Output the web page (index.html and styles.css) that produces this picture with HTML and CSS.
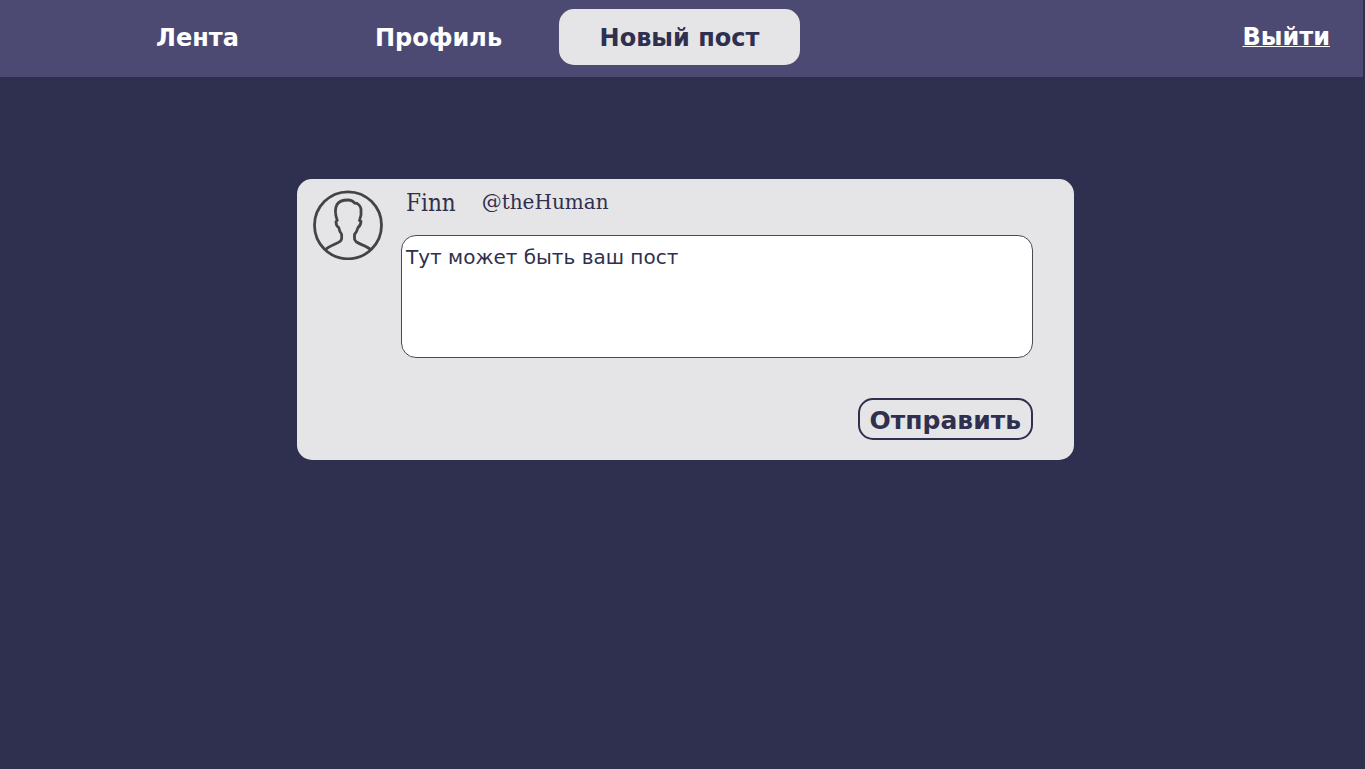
FILE: index.html
```html
<!DOCTYPE html>
<html lang="ru">
<head>
<meta charset="utf-8">
<meta name="viewport" content="width=device-width, initial-scale=1">
<title>Новый пост</title>
<link rel="stylesheet" href="styles.css">
</head>
<body>
<header class="header">
  <nav class="nav">
    <a class="nav-link" href="#feed">Лента</a>
    <a class="nav-link" href="#profile">Профиль</a>
    <a class="nav-link nav-link-active" href="#new" aria-current="page">Новый пост</a>
  </nav>
  <a class="logout" href="#logout">Выйти</a>
</header>
<main class="main">
  <form class="card">
    <svg class="avatar" viewBox="0 0 70 70" fill="none" stroke="#444445" stroke-width="2.8" stroke-linejoin="round" aria-hidden="true">
      <circle cx="35" cy="35.300" r="33.500"/>
      <path d="M12.500 59.500C17 55.500 24 54 27.500 51Q29.300 49 28.500 44Q26.500 41.500 25.700 37.500Q23 36 23 31.500L24.300 30.500C22 24 22 18 24 14.500C26 11 31 10 35 10C38 10 40 11 41.500 13C45 13 47.500 16 48 19C48.500 23 48 27 46.500 30.500L48 31.500Q47.500 36 45 37.500Q44 41.500 41.500 44.500V49Q42 51 43.500 52C48 55 54 56 57.500 59.500"/>
    </svg>
    <div class="post">
      <div class="author">
        <span class="name">Finn</span>
        <span class="handle">@theHuman</span>
      </div>
      <textarea class="text" aria-label="Текст поста" placeholder="Тут может быть ваш пост"></textarea>
      <button class="send" type="submit">Отправить</button>
    </div>
  </form>
</main>
</body>
</html>
```
FILE: styles.css
```css
* {
  box-sizing: border-box;
}

body {
  margin: 0;
  min-height: 100vh;
  background: #2f2f4f;
  color: #2f2f4f;
  font-family: "DejaVu Sans", sans-serif;
}

.header {
  display: flex;
  justify-content: space-between;
  align-items: center;
  margin-right: 2px;
  padding: 9px 33px 12px 77px;
  background: #4c4a73;
}

.nav {
  display: flex;
}

.nav-link {
  width: 241px;
  padding-top: 2px;
  border-radius: 15px;
  color: #fff;
  font-size: 24px;
  font-weight: bold;
  line-height: 54px;
  text-align: center;
  text-decoration: none;
}

.nav-link-active {
  background: #e5e5e7;
  color: #2f2f4f;
}

.logout {
  color: #fff;
  font-size: 24px;
  font-weight: bold;
  line-height: 54px;
  text-decoration-thickness: 1px;
}

.main {
  display: flex;
  justify-content: center;
  padding: 102px 16px 16px 22px;
}

.card {
  display: flex;
  gap: 18px;
  width: 100%;
  max-width: 777px;
  padding: 8px 41px 20px 16px;
  border-radius: 15px;
  background: #e5e5e7;
}

.avatar {
  flex: none;
  width: 70px;
  height: 70px;
  margin-top: 3px;
}

.post {
  display: flex;
  flex: 1;
  flex-direction: column;
}

.author {
  display: flex;
  gap: 26px;
  padding-left: 5px;
  font-family: "DejaVu Serif Condensed", "DejaVu Serif", serif;
  line-height: 32px;
}

.name {
  font-size: 24px;
}

.handle {
  font-family: "DejaVu Serif", serif;
  font-size: 20px;
  line-height: 30px;
}

.text {
  height: 123px;
  margin: 16px 0 40px;
  padding: 6px 4px;
  border: 1px solid #4b4b4d;
  border-radius: 15px;
  background: #fff;
  color: #2f2f4f;
  font-family: "DejaVu Sans", sans-serif;
  font-size: 20px;
  line-height: 30px;
  resize: none;
}

.text::placeholder {
  color: #2f2f4f;
  opacity: 1;
}

.send {
  align-self: flex-end;
  height: 42px;
  padding: 2px 10px 0;
  border: 2px solid #2f2f4f;
  border-radius: 15px;
  background: none;
  color: #2f2f4f;
  font-family: "DejaVu Sans", sans-serif;
  font-size: 25px;
  font-weight: bold;
}
```
